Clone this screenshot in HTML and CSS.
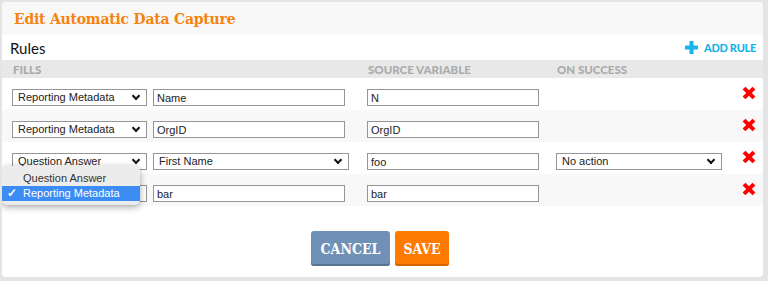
FILE: index.html
```html
<!DOCTYPE html>
<html>
<head>
    <title>Edit Automatic Data Capture</title>
    <meta charset=utf-8>
    <link rel="stylesheet" href="styles.css">
</head>
<body>
    <div id="panel">
        <div class="head">
            <h2>Edit Automatic Data Capture</h2>
        </div>
        <div class="rules-bar">
            <span class="rules">Rules</span>
            <a class="add-rule">
                <svg width="13" height="13" viewBox="0 0 13 13"><path d="M6.5 0v13M0 6.5h13" stroke="#16b4e9" stroke-width="4"/></svg>
                ADD RULE
            </a>
        </div>
        <div class="row thead">
            <span class="c1">Fills</span>
            <span class="c3">Source Variable</span>
            <span class="c4">On Success</span>
        </div>

        <div class="row">
            <div class="sel c1">Reporting Metadata</div>
            <input class="inp c2" value="Name">
            <input class="inp c3" value="N">
            <span class="c4"></span>
            <span class="del"></span>
        </div>
        <div class="row odd">
            <div class="sel c1">Reporting Metadata</div>
            <input class="inp c2" value="OrgID">
            <input class="inp c3" value="OrgID">
            <span class="c4"></span>
            <span class="del"></span>
        </div>
        <div class="row">
            <div class="sel c1">Question Answer</div>
            <div class="sel c2 wide">First Name</div>
            <input class="inp c3" value="foo">
            <div class="sel c4">No action</div>
            <span class="del"></span>
        </div>
        <div class="row odd">
            <div class="sel c1"><span class="hidden">Reporting Metadata</span></div>
            <input class="inp c2" value="bar">
            <input class="inp c3" value="bar">
            <span class="c4"></span>
            <span class="del"></span>
        </div>

        <div class="foot">
            <button class="btn cancel">CANCEL</button>
            <button class="btn save">SAVE</button>
        </div>

        <div class="menu">
            <div class="item">Question Answer</div>
            <div class="item on"><span class="tick">✓</span>Reporting Metadata</div>
        </div>
    </div>
</body>
</html>
```

FILE: styles.css
```css
body{
    margin:0;
    background: #e4e4e4;
    font-family: "Liberation Sans", Arial, sans-serif;
    height: 281px;
    overflow: hidden;
}
#panel{
    position: relative;
    margin: 2px 5px 0 2px;
    height: 275px;
    background: #fff;
    border-radius: 4px;
    overflow: hidden;
}
.head{
    height: 33px;
    background: #f8f8f8;
    padding-left: 12px;
    display: flex;
    align-items: center;
}
h2{
    margin: 0;
    font-family: "DejaVu Serif Condensed", "DejaVu Serif", serif;
    font-weight: bold;
    font-size: 15.5px;
    letter-spacing: -0.2px;
    color: #f7820e;
}
.rules-bar{
    height: 25px;
    display: flex;
    align-items: center;
    justify-content: space-between;
    padding: 0 7px 0 8px;
}
.rules{
    font-family: Lato, sans-serif;
    font-size: 15px;
    color: #111;
}
.add-rule{
    display: flex;
    align-items: center;
    gap: 6px;
    font-family: Lato, sans-serif;
    font-weight: 900;
    font-size: 11px;
    color: #16b4e9;
    letter-spacing: -0.3px;
}
.row{
    display: flex;
    align-items: flex-start;
    box-sizing: border-box;
    height: 32px;
    padding: 11px 0 0 10px;
}
.row.odd{ background: #f8f8f8; }
.c1{ width: 135px; flex: none; }
.c2{ width: 192px; margin-left: 6px; flex: none; }
.c2.wide{ width: 196px; }
.c3{ width: 172px; margin-left: 22px; flex: none; }
.sel.c2.wide + .c3{ margin-left: 18px; }
.c4{ width: 166px; margin-left: 17px; flex: none; }
.thead{
    height: 18px;
    padding: 0 0 0 11px;
    align-items: center;
    background: #e8e8e8;
    font-family: Lato, sans-serif;
    font-weight: 900;
    font-size: 11.5px;
    color: #ababab;
    text-transform: uppercase;
}
.thead .c3{ margin-left: 220px; }
.thead .c4{ margin-left: 17px; }
.sel, .inp{
    box-sizing: border-box;
    height: 17px;
    border: 1px solid #959595;
    background: #fff;
    font-family: "Liberation Sans", Arial, sans-serif;
    font-size: 11px;
    color: #222;
    margin-top: 0;
    margin-bottom: 0;
}
.sel{
    position: relative;
    padding: 1px 0 0 5px;
}
.sel::after{
    content: "";
    position: absolute;
    right: 7px;
    top: 3px;
    width: 4px;
    height: 4px;
    border-right: 2px solid #111;
    border-bottom: 2px solid #111;
    transform: rotate(45deg);
}
.hidden{ visibility: hidden; }
.inp{
    padding: 0 3px;
    outline: none;
}
.del{
    position: relative;
    width: 12px;
    height: 12px;
    margin-left: 21px;
    margin-top: -2px;
}
.del::before, .del::after{
    content: "";
    position: absolute;
    left: -1px;
    top: 4px;
    width: 14px;
    height: 4px;
    background: #f00;
    transform: rotate(45deg);
}
.del::after{ transform: rotate(-45deg); }
.foot{
    display: flex;
    justify-content: center;
    gap: 5px;
    padding-top: 25px;
    padding-right: 5px;
}
.btn{
    height: 35px;
    border: none;
    border-radius: 3px;
    font-family: "DejaVu Serif Condensed", "DejaVu Serif", serif;
    font-weight: bold;
    font-size: 14px;
    color: #fff;
}
.cancel{
    width: 79px;
    background: #6f91b6;
    box-shadow: inset 0 -2px 0 #587593;
}
.save{
    width: 54px;
    background: #ff7a00;
    box-shadow: inset 0 -2px 0 #d66400;
}
.menu{
    position: absolute;
    left: 0;
    top: 164px;
    width: 138px;
    padding: 5px 0 4px;
    background: #ececec;
    border-radius: 5px;
    box-shadow: 0 2px 7px rgba(0,0,0,.35);
    font-family: "Liberation Sans", Arial, sans-serif;
    font-size: 11px;
}
.item{
    height: 15px;
    line-height: 15px;
    padding-left: 21px;
    color: #333;
    position: relative;
}
.item.on{
    background: #3c8cf6;
    color: #fff;
}
.tick{
    position: absolute;
    left: 5px;
    font-size: 12px;
    font-weight: bold;
}
```
